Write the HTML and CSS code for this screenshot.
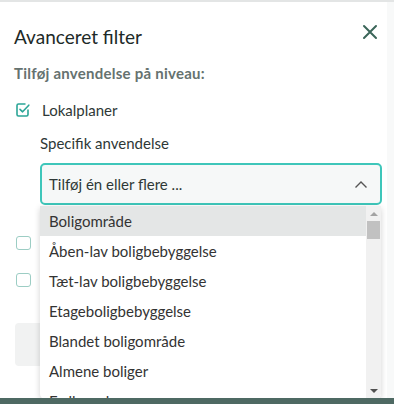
FILE: index.html
```html
<!DOCTYPE html>
<html lang="da">
<head>
  <meta charset="UTF-8" />
  <meta name="viewport" content="width=device-width, initial-scale=1.0" />
  <title>Avanceret filter</title>
  <link rel="stylesheet" href="styles.css">
</head>
<body>
  <div class="panel">
    <div class="panel-head">
      <h2>Avanceret filter</h2>
      <button class="close" aria-label="Luk">
        <svg width="16" height="16" viewBox="0 0 16 16"><path d="M2 2L14 14M14 2L2 14" stroke="#3b6659" stroke-width="2" fill="none" stroke-linecap="round"/></svg>
      </button>
    </div>

    <p class="section-title">Tilføj anvendelse på niveau:</p>

    <label class="check-row">
      <span class="box checked">
        <svg width="14" height="14" viewBox="0 0 14 14"><path d="M12 6.5V11.5A1.5 1.5 0 0 1 10.5 13H2.5A1.5 1.5 0 0 1 1 11.5V2.5A1.5 1.5 0 0 1 2.5 1H9.5" stroke="#2ba597" stroke-width="1.6" fill="none"/><path d="M4 6.3L6.6 8.8L12.8 2.2" stroke="#2ba597" stroke-width="1.6" fill="none" stroke-linecap="round" stroke-linejoin="round"/></svg>
      </span>
      Lokalplaner
    </label>

    <div class="sub">
      <p class="sub-label">Specifik anvendelse</p>
      <div class="select-wrap">
        <div class="select">
          <span>Tilføj én eller flere ...</span>
          <svg width="14" height="9" viewBox="0 0 14 9"><path d="M1.5 7.5L7 2L12.5 7.5" stroke="#555" stroke-width="1.4" fill="none"/></svg>
        </div>
        <div class="dropdown">
          <ul class="options">
            <li class="active">Boligområde</li>
            <li>Åben-lav boligbebyggelse</li>
            <li>Tæt-lav boligbebyggelse</li>
            <li>Etageboligbebyggelse</li>
            <li>Blandet boligområde</li>
            <li>Almene boliger</li>
            <li>Fællesanlæg</li>
          </ul>
          <div class="scrollbar">
            <span class="arrow up"></span>
            <span class="thumb"></span>
            <span class="track"></span>
            <span class="arrow down"></span>
          </div>
        </div>
      </div>
    </div>

    <label class="check-row plain first" aria-label="Kommuneplaner">
      <span class="box"></span>
    </label>
    <label class="check-row plain" aria-label="Kommuneplantillæg">
      <span class="box"></span>
    </label>

    <button class="apply" aria-label="Anvend filter"></button>
  </div>
</body>
</html>
```

FILE: styles.css
```css
html {
  background: #4e6963;
}
body {
  margin: 0;
  font-family: Lato, "Noto Sans", sans-serif;
  color: #2e3836;
}
.panel {
  height: 396px;
  background: #fff;
  border-top: 2px solid #e3e5e5;
  padding: 0 12px 0 14px;
  box-shadow: inset -7px 0 0 #f8f9f9;
}
.panel-head {
  display: flex;
  justify-content: space-between;
  align-items: flex-start;
  padding-top: 22px;
}
h2 {
  margin: 0;
  font-size: 19px;
  font-weight: 400;
  line-height: 26px;
  color: #1d2a28;
}
.close {
  border: 0;
  background: none;
  padding: 0;
  margin: 0 4px 0 0;
  width: 16px;
  height: 16px;
}
.section-title {
  margin: 13px 0 0;
  font-size: 15px;
  font-weight: 700;
  letter-spacing: 0.25px;
  line-height: 20px;
  color: #65726f;
}
.check-row {
  display: flex;
  align-items: center;
  gap: 12px;
  margin-top: 17px;
  height: 20px;
  font-size: 15px;
  line-height: 20px;
  padding-left: 2px;
}
.check-row.first {
  margin-top: 28px;
}
.box {
  width: 14px;
  height: 14px;
  box-sizing: border-box;
  flex: none;
}
.box.checked svg {
  display: block;
}
.check-row.plain .box {
  width: 15px;
  border: 1.5px solid #9ccdc4;
  border-radius: 3px;
}
.sub {
  padding-left: 26px;
}
.sub-label {
  margin: 13px 0 0;
  font-size: 15px;
  line-height: 20px;
}
.select-wrap {
  position: relative;
  margin-top: 10px;
}
.select {
  height: 42px;
  box-sizing: border-box;
  border: 2px solid #3ec6ba;
  border-radius: 5px;
  background: #f6f8f8;
  display: flex;
  align-items: center;
  justify-content: space-between;
  padding: 0 12px 0 7px;
  font-size: 15px;
}
.dropdown {
  position: absolute;
  top: 43px;
  left: 0;
  right: 1px;
  height: 193px;
  background: #fff;
  border-radius: 0 0 5px 5px;
  box-shadow: 0 2px 6px rgba(0, 0, 0, 0.18);
  display: flex;
  overflow: hidden;
  z-index: 2;
}
.options {
  list-style: none;
  margin: 0;
  padding: 0;
  flex: 1;
}
.options li {
  height: 30px;
  line-height: 30px;
  padding-left: 9px;
  font-size: 15px;
  color: #333;
}
.options li.active {
  background: #e4e6e6;
}
.scrollbar {
  width: 15px;
  background: #f1f1f1;
  display: flex;
  flex-direction: column;
  align-items: center;
}
.arrow {
  width: 0;
  height: 0;
  border-left: 4px solid transparent;
  border-right: 4px solid transparent;
  margin: 6px 0 5px;
}
.arrow.up {
  border-bottom: 4px solid #a3a3a3;
}
.arrow.down {
  border-top: 4px solid #505050;
  margin: 5px 0 6px;
}
.thumb {
  width: 13px;
  height: 18px;
  background: #c1c1c1;
}
.track {
  flex: 1;
}
.apply {
  display: block;
  margin-top: 33px;
  margin-left: 1px;
  width: 180px;
  height: 43px;
  border: 0;
  border-radius: 4px;
  background: #f1f2f2;
}
```
